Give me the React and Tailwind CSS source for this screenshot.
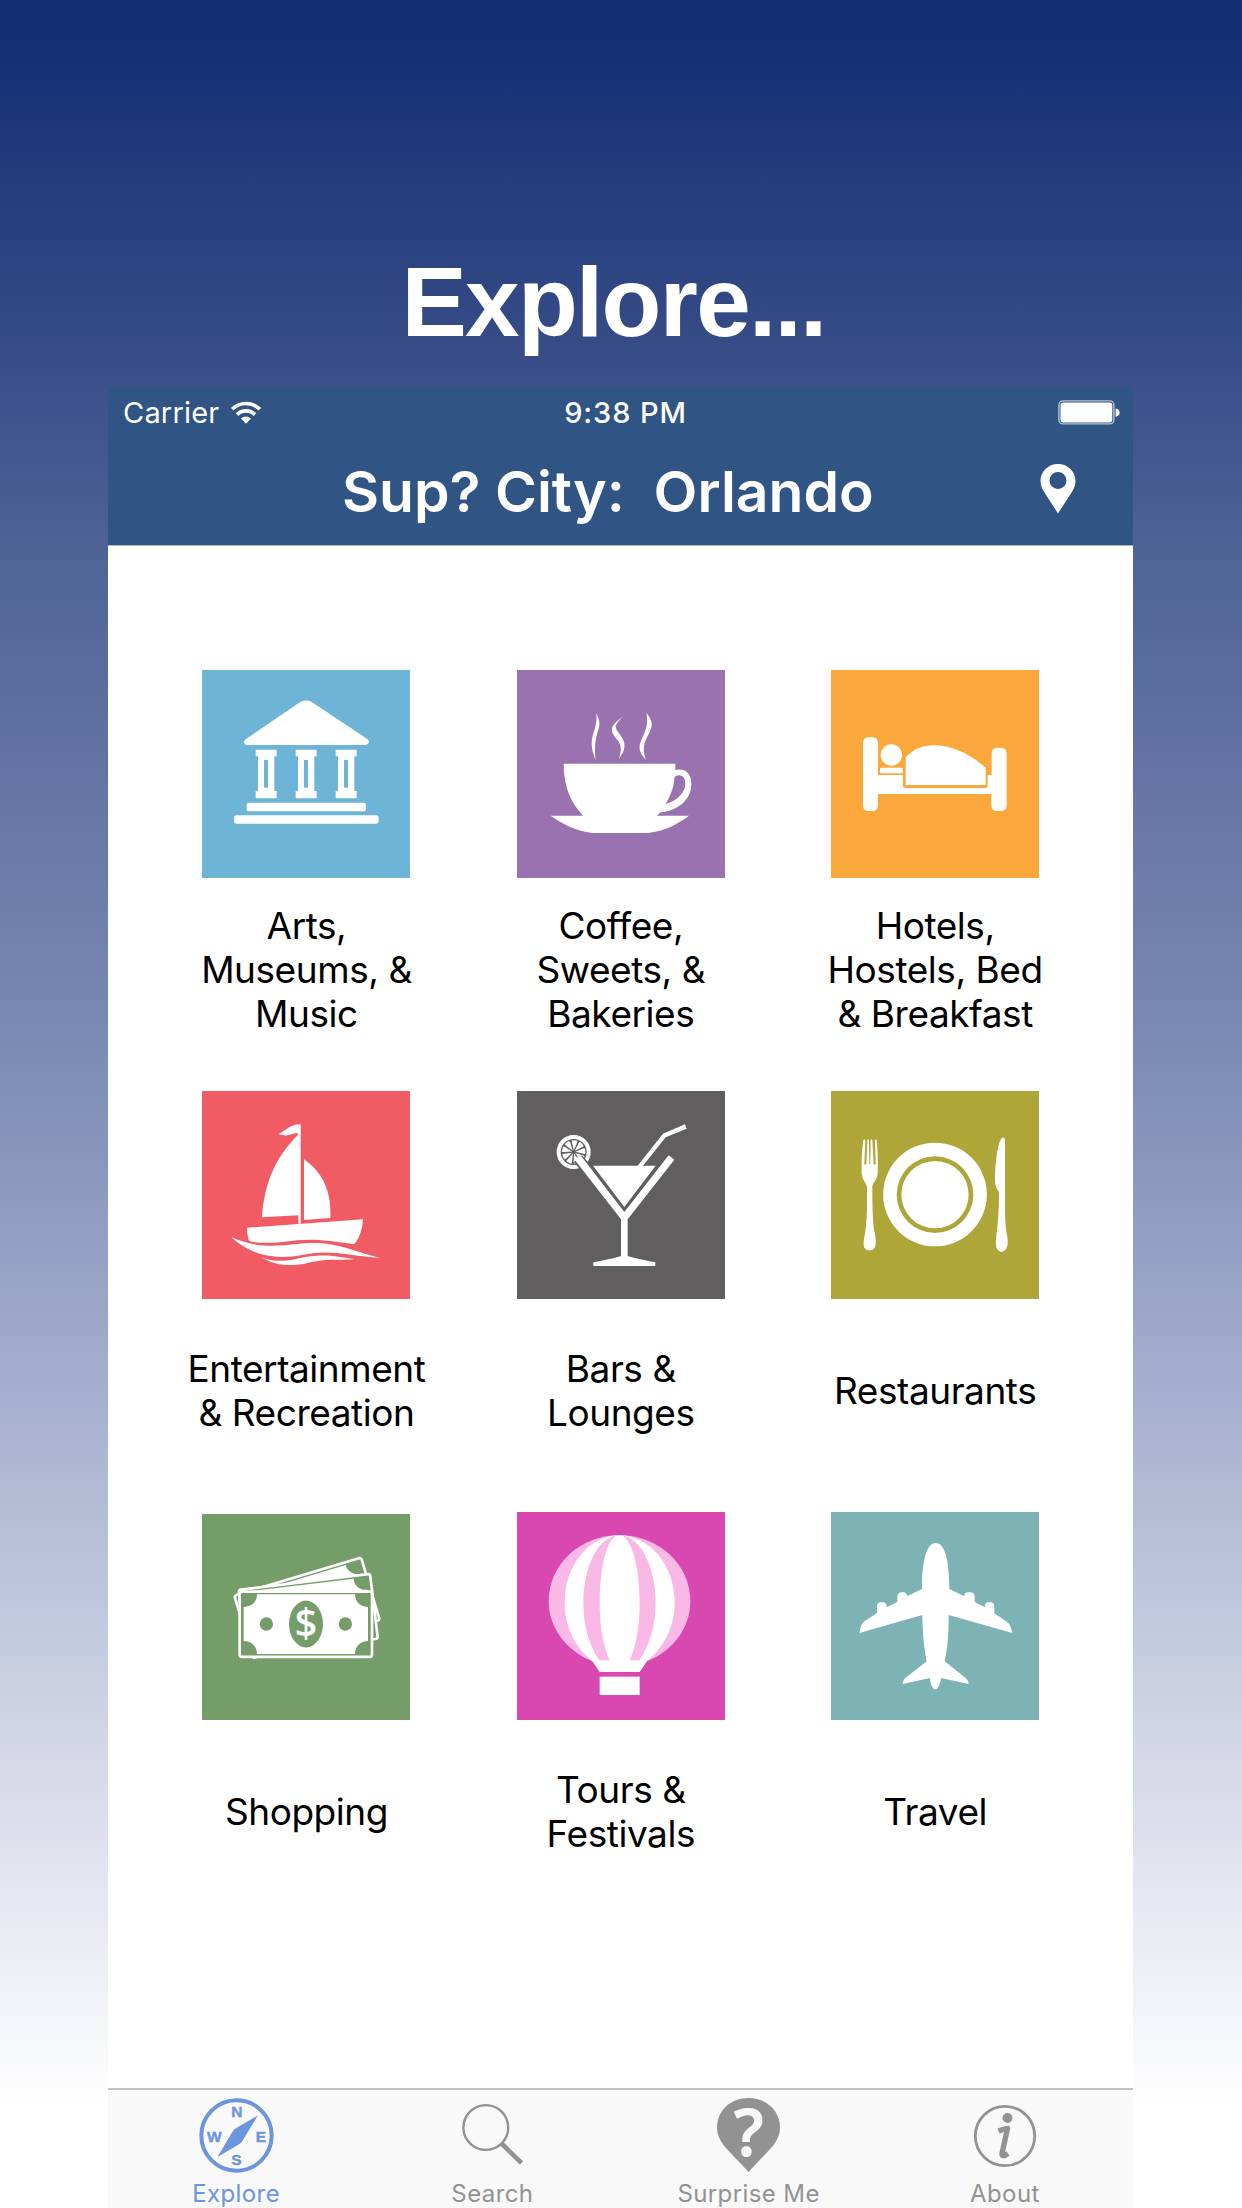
const Museum = () => (
  <svg viewBox="36 30 624 624" className="size-full" fill="white">
    <path d="M332 125q16-7 32 0L531 236q8 6 5 13-3 6-11 6H173q-9 0-11-7-1-6 6-11z" />
    {[197, 317, 437].map((x) => (
      <path key={x} fillRule="evenodd" transform={`translate(${x} 269)`} d="M0 0h63v20h-7v104h7v22H0v-22h7V20H0zM25 31v83h12V31z" />
    ))}
    <rect x="170" y="428" width="358" height="26" rx="8" />
    <rect x="132" y="466" width="434" height="25" rx="8" />
  </svg>
);

const Coffee = () => (
  <svg viewBox="34 30 624 624" className="size-full" fill="white">
    <path d="M272 160c10 20 11 32 7 46-7 22-15 45-9 94-13-32-15-53-8-76 8-25 12-40 10-64z" />
    <path d="M356 168c-24 17-32 32-19 48 18 22 32 44 3 80 9-30 7-42-8-60-19-23-22-40 24-68z" />
    <path d="M422 158c19 22 20 40 9 60-13 25-24 44-10 81-21-20-23-38-15-57 14-32 23-46 16-84z" />
    <path fillRule="evenodd" d="M174 311H509v19c31-8 49 12 48 44-1 44-37 76-91 83l-13 10h97c-36 26-72 46-123 52H260c-48-6-88-26-125-52h97c-37-41-58-86-58-156zM507 350c-3 32-11 54-27 82 35-8 60-36 59-62 0-20-14-30-32-20z" />
  </svg>
);

const Bed = () => (
  <svg viewBox="33 30 624 624" className="size-full" fill="white">
    <path d="M129 251q0-19 17-19h11q17 0 17 19v94h75v31q0 8 8 8h239q7 0 7-8v-31h12v-64q0-18 16-18h12q17 0 17 18v153q0 19-17 19h-12q-17 0-17-19v-32H174v32q0 19-17 19h-11q-17 0-17-19z" />
    <circle cx="214" cy="285" r="32" />
    <rect x="180" y="323" width="69" height="17" rx="5" />
    <path d="M257 292c28-28 53-37 89-36 60 3 106 29 151 67v52H257z" />
  </svg>
);

const Boat = () => (
  <svg viewBox="37 32 624 624" className="size-full" fill="white">
    <path d="M266 161c22-8 35-30 67-29v298h-7v-25l-109 6c7-105 42-182 108-248v-4c-22-1-25 13-59 2z" />
    <path d="M343 237c60 42 82 101 79 176l-79 6z" />
    <path d="M172 442l348-25q-2 45-26 75c-96-16-143-18-210-8q-69 8-105-2-7-14-7-40z" />
    <path d="M125 471c75 32 128 27 195 20 112-12 141 13 252 42-109-9-151-27-236-9-94 18-159-6-211-53z" />
    <path d="M218 532c51 17 86 8 124-1 63-12 98-3 153 5-50 6-79-4-141 12-46 12-101 7-136-16z" />
  </svg>
);

const Cocktail = () => (
  <svg viewBox="34 33 624 624" className="size-full" fill="white">
    <circle cx="204" cy="216" r="45" fill="none" stroke="white" strokeWidth="12" />
    {[5, 45, 85, 125, 165, 205, 245, 285, 325].map((a) => (
      <path key={a} transform={`rotate(${a} 204 216)`} d="M204 211l-8-24q-2-5 2-6h12q4 1 2 6z" />
    ))}
    <path d="M217 236l139 169L495 236" fill="none" stroke="#605e5f" strokeWidth="32" />
    <path d="M262 257h134l76-96 66-28 5 13-63 26-68 85h38l-94 124z" />
    <path d="M207 239q2-11 20-10l129 167L489 226l17 13-140 179v110q14 5 83 19v11H263v-11q70-14 83-19V418z" />
  </svg>
);

const Plate = () => (
  <svg viewBox="33 32 624 624" className="size-full" fill="white">
    <path d="M130 180q3-6 6 0l-3 70q0 3 3 3t3-3l3-70q2-6 5 0l1 70q1 6 3 0l1-70q3-6 5 0l4 70q1 3 3 3t3-3l-2-70q3-6 5 0c4 40 4 70 3 100-2 22-17 27-16 42 0 52 1 101 6 130 4 20 5 29 4 40-2 13-6 18-18 18s-18-5-18-18c-1-11 3-22 5-40 5-30 6-80 5-130 0-13-13-20-16-42-1-36 0-65 5-100z" />
    <path fillRule="evenodd" d="M345 187a155 155 0 1 0 0 311 155 155 0 1 0 0-311zm0 41a115 115 0 1 1 0 230 115 115 0 1 1 0-230z" />
    <circle cx="345" cy="343" r="101" />
    <path d="M551 172q5 1 4 14v175c0 57 2 85 6 103 6 28 0 50-16 50s-20-18-16-47c5-40 8-80 8-133-16-16-12-41-11-65 3-45 11-101 25-97z" />
  </svg>
);

const Bill = ({ children, ...rest }) => (
  <g {...rest}>
    <rect x="149" y="273" width="397" height="195" rx="7" fill="#759d69" stroke="white" strokeWidth="8" />
    <path fill="white" d="M201 281h294c0 24 17 38 39 38v102c-22 0-39 15-39 39H201c0-24-17-39-40-39V319c23 0 40-14 40-38z" />
    {children}
  </g>
);

const Money = () => (
  <svg viewBox="36 41 624 616" preserveAspectRatio="none" className="size-full">
    <Bill transform="translate(133 285) rotate(-16.6) translate(-149 -273)" />
    <Bill transform="translate(146 268) rotate(-6.9) translate(-149 -273)" />
    <Bill>
      <circle cx="229" cy="370" r="20" fill="#759d69" />
      <circle cx="466" cy="370" r="20" fill="#759d69" />
      <ellipse cx="348" cy="370" rx="51" ry="70" fill="#759d69" />
      <text x="348" y="410" textAnchor="middle" fontSize="118" fill="white" className="font-['Open_Sans',sans-serif] font-semibold">$</text>
    </Bill>
  </svg>
);

const Balloon = () => (
  <svg viewBox="34 35 624 624" className="size-full">
    <path fill="#f9b8e6" d="M341 105c119 0 213 88 213 198 0 78-50 148-130 180H260C180 451 129 381 129 303c0-110 93-198 212-198z" />
    <path fill="white" d="M341 105c88 0 166 88 166 200 0 76-31 134-83 178l-22 32H282l-22-32c-52-44-83-102-83-178 0-112 76-200 164-200z" />
    <path fill="#f9b8e6" d="M335 105c-60 8-102 98-102 203 0 66 16 125 48 172h31c-18-40-30-95-30-172 0-105 20-190 53-203zM347 105c60 8 103 98 103 203 0 66-17 125-49 172h-29c18-40 30-95 30-172 0-105-22-190-55-203z" />
    <rect x="282" y="529" width="120" height="55" fill="white" />
  </svg>
);

const Plane = () => (
  <svg viewBox="34 35 624 624" className="size-full" fill="white">
    <path d="M348 128c28 0 41 52 41 138l45 22c-1-10 3-12 15-12s16 4 16 16v13l31 16c-1-10 2-15 14-15s14 6 14 17v16l34 23c10 5 16 16 20 36l-191-54c0 60-3 95-12 139l64 51q9 9 8 17l-83-18c-3 21-9 34-17 34s-14-13-16-34l-82 18q0-9 7-17l65-51c-8-44-12-79-13-139l-189 54c3-17 7-30 17-36l36-24v-15c0-12 3-17 14-17s15 5 15 15l32-16v-13c0-12 4-16 15-16s14 3 14 12l45-22c0-86 14-138 41-138z" />
  </svg>
);

const Wifi = () => (
  <svg viewBox="0 0 30 23" className="h-[23px] w-[30px]" fill="none" stroke="white" strokeWidth="3.6">
    <path d="M1.2 8.2a19.6 19.6 0 0 1 27.6 0" />
    <path d="M6 13.6a12.8 12.8 0 0 1 18 0" />
    <path d="M15 22.8l-5-5.4a7.2 7.2 0 0 1 10 0z" fill="white" stroke="none" />
  </svg>
);

const Battery = () => (
  <svg viewBox="0 0 62 25" className="h-[25px] w-[62px]" fill="white">
    <rect x=".9" y=".9" width="55" height="23" rx="4" fill="none" stroke="#b4c2d4" strokeWidth="1.4" />
    <rect x="2.5" y="2.4" width="51.8" height="20" rx="2.4" />
    <path d="M57.6 8.4q4 .6 4 4.2t-4 4.2z" />
  </svg>
);

const Pin = () => (
  <svg viewBox="0 0 36 50" className="mb-1.5 h-[50px] w-9" fill="white">
    <path fillRule="evenodd" d="M18 0C8 0 .5 7.6.5 17c0 4 1.4 7 3 10L18 49.5 32.5 27c1.6-3 3-6 3-10C35.5 7.600 28 0 18 0zm0 8a8.500 8.500 0 1 1 0 17 8.500 8.500 0 1 1 0-17z" />
  </svg>
);

const Compass = () => (
  <svg viewBox="198 2098 76 76" className="size-[76px]" fill="#6b95dc">
    <circle cx="236.5" cy="2135.5" r="35.2" fill="none" stroke="#6b95dc" strokeWidth="4" />
    <path d="M257.8 2115.5l-14.800 24.500q-2 4-6 5.500l-19.500 11.500 14.500-24.500q2-4 6-5.500z" />
    <g fontSize="15.5" textAnchor="middle" stroke="#6b95dc" strokeWidth=".4" className="font-['Liberation_Sans',sans-serif] font-bold">
      <text x="237" y="2117">N</text>
      <text x="214.5" y="2141.5">W</text>
      <text x="261" y="2141.5">E</text>
      <text x="236.5" y="2165">S</text>
    </g>
  </svg>
);

const Magnifier = () => (
  <svg viewBox="454 2098 76 76" className="size-[76px]" fill="none" stroke="#929292">
    <circle cx="485.8" cy="2127.5" r="22.4" strokeWidth="2.4" />
    <path d="M501.5 2143.5l20 19.5" strokeWidth="4.6" />
  </svg>
);

const Question = () => (
  <svg viewBox="710 2098 76 76" className="size-[76px] overflow-visible">
    <path fill="#929292" d="M747.5 2098c18 0 31.5 12.6 31.5 29.5 0 6.5-3 13.5-8 19.5l-23.5 25-23.5-25c-5-6-8-13-8-19.5 0-16.900 13.500-29.500 31.500-29.500z" />
    <text x="748" y="2156" textAnchor="middle" fontSize="65" fill="#f9f9f9" stroke="#f9f9f9" strokeWidth="1.2" className="font-['Open_Sans',sans-serif] font-semibold">?</text>
  </svg>
);

const Info = () => (
  <svg viewBox="967 2098 76 76" className="size-[76px]">
    <circle cx="1005" cy="2136" r="29.7" fill="none" stroke="#929292" strokeWidth="2.8" />
    <circle cx="1007.5" cy="2118" r="5" fill="#929292" />
    <path d="M998.5 2131q5-2 9-2.5l-5.500 25q-.500 4.500 6 0" fill="none" stroke="#929292" strokeWidth="5.4" strokeLinejoin="round" />
  </svg>
);

const categories = [
  { lines: ["Arts,", "Museums, &", "Music"], tile: "h-52 bg-[#6eb4d6]", Icon: Museum },
  { lines: ["Coffee,", "Sweets, &", "Bakeries"], tile: "h-52 bg-[#9a72b0]", Icon: Coffee },
  { lines: ["Hotels,", "Hostels, Bed", "& Breakfast"], tile: "h-52 bg-[#faa83b]", Icon: Bed },
  { lines: ["Entertainment", "& Recreation"], tile: "h-52 bg-[#f05b64]", Icon: Boat },
  { lines: ["Bars &", "Lounges"], tile: "h-52 bg-[#605e5f]", Icon: Cocktail },
  { lines: ["Restaurants"], tile: "h-52 bg-[#aea639]", Icon: Plate },
  { lines: ["Shopping"], tile: "mt-0.5 h-[206px] bg-[#759d69]", Icon: Money },
  { lines: ["Tours &", "Festivals"], tile: "h-52 bg-[#d848b0]", Icon: Balloon },
  { lines: ["Travel"], tile: "h-52 bg-[#7db3b5]", Icon: Plane },
];

const tabs = [
  { label: "Explore", color: "text-[#6b95dc]", Icon: Compass },
  { label: "Search", color: "text-[#929292]", Icon: Magnifier },
  { label: "Surprise Me", color: "text-[#929292]", Icon: Question },
  { label: "About", color: "text-[#929292]", Icon: Info },
];

export default function App() {
  return (
    <div className="flex h-[2208px] w-[1242px] flex-col overflow-hidden bg-[linear-gradient(180deg,#132d75_0px,#142e75_40px,#29427f_240px,#3c508a_388px,#4f6497_560px,#7485b0_985px,#a8b1cf_1410px,#dde0ec_1830px,#ffffff_2110px)] font-[Inter,sans-serif]">
      <h1 className="h-[387px] pt-[252px] pr-[15px] text-center font-['Liberation_Sans',sans-serif] text-[98px] leading-[100px] font-bold tracking-[-1.7px] text-white">Explore...</h1>
      <main className="ml-[108px] flex w-[1025px] grow flex-col bg-white">
        <header className="h-[159px] border-b border-[#a9b7c9] bg-[#305483] text-white">
          <div className="grid h-[51px] grid-cols-[1fr_auto_1fr] items-center pr-[13px] pl-[15px] text-[29px] leading-[51px]">
            <div className="flex items-center gap-3">
              <span className="tracking-[0.2px]">Carrier</span>
              <Wifi />
            </div>
            <span className="pl-2 font-medium tracking-[0.9px]">9:38 PM</span>
            <div className="flex justify-end"><Battery /></div>
          </div>
          <div className="flex h-[107px] items-center justify-between pr-[57px] pl-[234px]">
            <h2 className="text-[57px] leading-[107px] font-semibold whitespace-pre">Sup? City:{"  "}Orlando</h2>
            <Pin />
          </div>
        </header>
        <section className="grid grow auto-rows-[421px] grid-cols-3 pt-[124px] pr-[40.7px] pl-[41.3px]">
          {categories.map(({ lines, tile, Icon }) => (
            <div key={lines[0]} className="flex flex-col items-center">
              <div className={`w-52 ${tile}`}><Icon /></div>
              <p className="flex h-[183px] flex-col justify-center text-center text-[37px] leading-[44px] tracking-[-0.45px] text-black">
                {lines.map((line) => <span key={line}>{line}</span>)}
              </p>
            </div>
          ))}
        </section>
        <nav className="grid h-[120px] shrink-0 grid-cols-4 border-t-2 border-[#c2c2c2] bg-[#f9f9f9] pt-2">
          {tabs.map(({ label, color, Icon }) => (
            <div key={label} className={`flex flex-col items-center text-[24px] leading-[27px] tracking-[0.4px] ${color}`}>
              <Icon />
              <span className="mt-1.5">{label}</span>
            </div>
          ))}
        </nav>
      </main>
    </div>
  );
}
